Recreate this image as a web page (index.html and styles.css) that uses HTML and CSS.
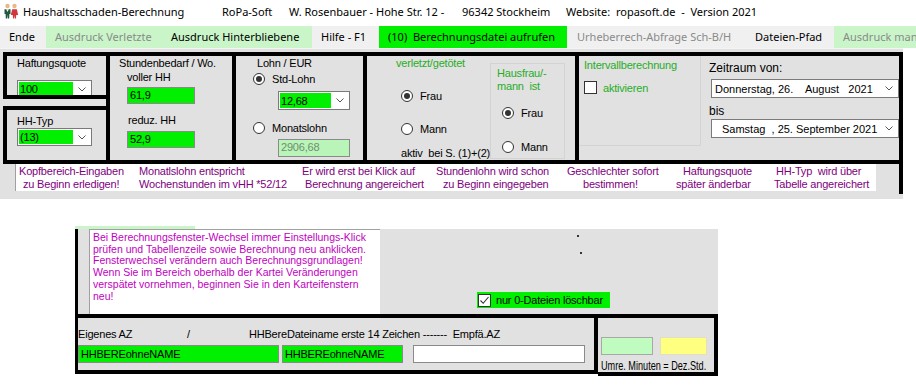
FILE: index.html
```html
<!DOCTYPE html>
<html>
<head>
    <meta charset="utf-8">
    <title>Haushaltsschaden-Berechnung</title>
    <link rel="stylesheet" href="styles.css">
</head>
<body>
    <div class="titlebar">
        <span class="t-icon">
            <svg width="16" height="16" viewBox="0 0 16 16">
                <circle cx="4.5" cy="3" r="2.2" fill="#e8b888"/>
                <path d="M1.5 6.2 L7.5 6.2 L7.5 11 L6.4 11 L6.2 15.5 L4.9 15.5 L4.6 11.5 L4.2 15.5 L2.8 15.5 L2.6 11 L1.5 11 Z" fill="#1f5a3c"/>
                <circle cx="11.5" cy="3" r="2.2" fill="#e8b888"/>
                <path d="M9.2 6.2 L13.8 6.2 L15.2 12 L13.2 12 L13 15.5 L11.9 15.5 L11.5 12.5 L11.1 15.5 L10 15.5 L9.8 12 L7.8 12 Z" fill="#d2363a"/>
                <path d="M3.2 6.2 L4.5 9 L5.8 6.2 Z" fill="#fff"/>
            </svg>
        </span>
        <span class="t-name">Haushaltsschaden-Berechnung</span>
        <span class="t-firm">RoPa-Soft</span>
        <span class="t-addr">W. Rosenbauer - Hohe Str. 12 -</span>
        <span class="t-city">96342 Stockheim</span>
        <span class="t-web">Website:  ropasoft.de  -  Version 2021</span>
    </div>

    <div class="menubar">
        <span class="mi m-ende">Ende</span>
        <span class="mi m-av light off">Ausdruck Verletzte</span>
        <span class="mi m-ah light">Ausdruck Hinterbliebene</span>
        <span class="mi m-hilfe">Hilfe - F1</span>
        <span class="mi m-calc lime">(10)  Berechnungsdatei aufrufen</span>
        <span class="mi m-urh off">Urheberrech-Abfrage Sch-B/H</span>
        <span class="mi m-pfad">Dateien-Pfad</span>
        <span class="mi m-man light off">Ausdruck man</span>
    </div>

    <div class="top">
        <div class="groups">
            <div class="col1">
                <div class="grp grp-a">
                    <div class="lbl">Haftungsquote</div>
                    <div class="combo combo-q">
                        <span class="fill">100</span>
                        <svg class="chev" width="8" height="5" viewBox="0 0 8 5"><polyline points="0.5,0.5 4,4 7.5,0.5" fill="none" stroke="#555" stroke-width="1"/></svg>
                    </div>
                </div>
                <div class="grp grp-b">
                    <div class="lbl">HH-Typ</div>
                    <div class="combo combo-q">
                        <span class="fill">(13)</span>
                        <svg class="chev" width="8" height="5" viewBox="0 0 8 5"><polyline points="0.5,0.5 4,4 7.5,0.5" fill="none" stroke="#555" stroke-width="1"/></svg>
                    </div>
                </div>
            </div>

            <div class="grp grp-c">
                <div class="lbl">Stundenbedarf / Wo.</div>
                <div class="lbl c-voll">voller HH</div>
                <div class="tb c-tb1">61,9</div>
                <div class="lbl c-red">reduz. HH</div>
                <div class="tb c-tb2">52,9</div>
            </div>

            <div class="grp grp-d">
                <div class="lbl d-head">Lohn / EUR</div>
                <div class="radio d-r1"><i class="on"></i>Std-Lohn</div>
                <div class="combo combo-l">
                    <span class="fill">12,68</span>
                    <svg class="chev" width="8" height="5" viewBox="0 0 8 5"><polyline points="0.5,0.5 4,4 7.5,0.5" fill="none" stroke="#555" stroke-width="1"/></svg>
                </div>
                <div class="radio d-r2"><i></i>Monatslohn</div>
                <div class="tb pale d-tb">2906,68</div>
            </div>

            <div class="grp grp-e">
                <div class="e-left">
                    <div class="lbl green">verletzt/getötet</div>
                    <div class="radio e-r1"><i class="on"></i>Frau</div>
                    <div class="radio e-r2"><i></i>Mann</div>
                    <div class="lbl e-note">aktiv  bei S. (1)+(2)</div>
                </div>
                <div class="e-right">
                    <div class="lbl green">Hausfrau/-</div>
                    <div class="lbl green">mann  ist</div>
                    <div class="radio e-r3"><i class="on"></i>Frau</div>
                    <div class="radio e-r4"><i></i>Mann</div>
                </div>
            </div>

            <div class="grp grp-f">
                <div class="f-left">
                    <div class="lbl green">Intervallberechnung</div>
                    <div class="cbrow"><span class="cb"></span><span class="green">aktivieren</span></div>
                </div>
                <div class="f-right">
                    <div class="lbl12">Zeitraum von:</div>
                    <div class="date date-1">
                        <span>Donnerstag, 26.    August   2021</span>
                        <svg class="chev" width="8" height="5" viewBox="0 0 8 5"><polyline points="0.5,0.5 4,4 7.5,0.5" fill="none" stroke="#555" stroke-width="1"/></svg>
                    </div>
                    <div class="lbl12 f-bis">bis</div>
                    <div class="date date-2">
                        <span>Samstag  , 25. September 2021</span>
                        <svg class="chev" width="8" height="5" viewBox="0 0 8 5"><polyline points="0.5,0.5 4,4 7.5,0.5" fill="none" stroke="#555" stroke-width="1"/></svg>
                    </div>
                </div>
            </div>
        </div>

        <div class="hints-wrap">
            <div class="hints">
                <div class="hc h1"><div class="l1">Kopfbereich-Eingaben</div><div class="l2">zu Beginn erledigen!</div></div>
                <div class="hc h2"><div class="l1">Monatlslohn entspricht</div><div class="l2">Wochenstunden im vHH *52/12</div></div>
                <div class="hc h3"><div class="l1">Er wird erst bei Klick auf</div><div class="l2">Berechnung angereichert</div></div>
                <div class="hc h4"><div class="l1">Stundenlohn wird schon</div><div class="l2">zu Beginn eingegeben</div></div>
                <div class="hc h5"><div class="l1">Geschlechter sofort</div><div class="l2">bestimmen!</div></div>
                <div class="hc h6"><div class="l1">Haftungsquote</div><div class="l2">später änderbar</div></div>
                <div class="hc h7"><div class="l1">HH-Typ  wird über</div><div class="l2">Tabelle angereichert</div></div>
            </div>
        </div>
    </div>

    <div class="lower">
        <div class="strip"></div>
        <div class="lower-body">
            <div class="msg">Bei Berechnungsfenster-Wechsel immer Einstellungs-Klick prüfen und Tabellenzeile sowie Berechnung neu anklicken. Fensterwechsel verändern auch Berechnungsgrundlagen! Wenn Sie im Bereich oberhalb der Kartei Veränderungen verspätet vornehmen, beginnen Sie in den Karteifenstern neu!</div>
            <div class="lower-right">
                <span class="dot dot-1"></span>
                <span class="dot dot-2"></span>
                <div class="keep">
                    <span class="cb">
                        <svg width="11" height="11" viewBox="0 0 11 11"><polyline points="1.5,5.5 4.2,8.3 9.5,2" fill="none" stroke="#333" stroke-width="1.1"/></svg>
                    </span>
                    <span>nur 0-Dateien löschbar</span>
                </div>
            </div>
        </div>
        <div class="lower-foot">
            <div class="azbox">
                <div class="az-labels">
                    <span class="az-l1">Eigenes AZ</span>
                    <span class="az-l2">/</span>
                    <span>HHBereDateiname erste 14 Zeichen -------  Empfä.AZ</span>
                </div>
                <div class="az-inputs">
                    <div class="tb az-tb1">HHBEREohneNAME</div>
                    <div class="tb az-tb2">HHBEREohneNAME</div>
                    <div class="tb white az-tb3"></div>
                </div>
            </div>
            <div class="minbox">
                <div class="swatches">
                    <span class="sw sw-green"></span>
                    <span class="sw sw-yellow"></span>
                </div>
                <div class="min-note">Umre. Minuten = Dez.Std.</div>
            </div>
        </div>
    </div>
</body>
</html>
```

FILE: styles.css
```css
* {
    box-sizing: border-box;
}

body {
    margin: 0;
    width: 916px;
    height: 389px;
    overflow: hidden;
    background-color: #fff;
    font-family: "Liberation Sans", Arial, sans-serif;
    font-size: 11px;
    letter-spacing: -0.2px;
    color: #000;
}

/* window title */
.titlebar {
    display: flex;
    align-items: center;
    height: 22px;
    font-family: "Noto Sans", sans-serif;
    font-size: 11px;
    letter-spacing: 0;
    white-space: pre;
}

.titlebar span {
    flex: none;
}

.t-icon {
    display: flex;
    width: 23px;
    padding-left: 3px;
}

.t-name { width: 199px; }
.t-firm { width: 67px; }
.t-addr { width: 173px; }
.t-city { width: 104px; }

/* menu */
.menubar {
    display: flex;
    height: 22px;
    margin-top: 4px;
    background-color: #f0f0f0;
    font-family: "Noto Sans", sans-serif;
    font-size: 11px;
    letter-spacing: 0;
}

.mi {
    flex: none;
    padding-left: 9px;
    line-height: 22px;
    white-space: pre;
    overflow: hidden;
}

.mi.light { background-color: #c9f5c9; }
.mi.lime { background-color: #00f000; }
.mi.off { color: #8a8a8a; }

.m-ende { width: 46px; }
.m-av { width: 115px; }
.m-ah { width: 151px; padding-left: 10px; }
.m-hilfe { width: 67px; }
.m-calc { width: 188px; }
.m-urh { width: 179px; padding-left: 10px; }
.m-pfad { width: 88px; }
.m-man { flex: 1; }

/* upper form */
.top {
    width: 903px;
    padding: 3px 0 5px 0;
    background-color: #e1e1e1;
    border-top: 1px solid #f4f4f4;
}

.groups {
    display: flex;
    height: 112px;
    margin-left: 3px;
}

.col1 {
    display: flex;
    flex-direction: column;
    justify-content: space-between;
    width: 103px;
}

.grp {
    border: 4px solid #000;
    border-right: 0;
    overflow: hidden;
}

.lbl {
    line-height: 13px;
    white-space: pre;
}

.lbl12 {
    font-size: 12px;
    letter-spacing: 0;
    line-height: 14px;
}

.green {
    color: #26ad26;
}

.grp-a {
    height: 47px;
    padding: 1px 0 0 10px;
}

.grp-a .combo {
    margin-top: 10px;
}

.grp-b {
    height: 58px;
    padding: 5px 0 0 10px;
}

/* combo boxes and text boxes */
.combo {
    display: flex;
    align-items: center;
    height: 18px;
    padding: 1px;
    border: 1px solid #7a7a7a;
    background-color: #fff;
}

.combo .fill {
    height: 100%;
    padding-left: 1px;
    line-height: 14px;
    background-color: #00f000;
}

.chev {
    flex: none;
    margin-left: auto;
    margin-right: 4px;
}

.combo-q {
    width: 75px;
}

.combo-q .fill {
    width: 54px;
}

.tb {
    height: 17px;
    padding-left: 2px;
    border: 1px solid #8a8a8a;
    line-height: 15px;
    background-color: #00f000;
    white-space: pre;
}

.tb.pale {
    color: #6f8f6f;
    background-color: #b9f4b9;
}

.tb.white {
    background-color: #fff;
}

.grp-c {
    width: 126px;
    padding: 1px 0 0 9px;
}

.c-voll {
    margin: 1px 0 0 8px;
}

.c-tb1 {
    width: 68px;
    margin: 3px 0 0 8px;
}

.c-red {
    margin: 10px 0 0 9px;
}

.c-tb2 {
    width: 68px;
    margin: 4px 0 0 8px;
}

/* radio buttons */
.radio {
    display: flex;
    align-items: center;
    height: 14px;
}

.radio i {
    display: flex;
    align-items: center;
    justify-content: center;
    flex: none;
    width: 12px;
    height: 12px;
    margin-right: 7px;
    border: 1px solid #333;
    border-radius: 50%;
    background-color: #fff;
}

.radio i.on::after {
    content: "";
    width: 6px;
    height: 6px;
    border-radius: 50%;
    background-color: #333;
}

.grp-d {
    width: 131px;
    padding: 1px 0 0 17px;
}

.d-head {
    margin-left: 4px;
}

.d-r1 {
    margin-top: 2px;
}

.combo-l {
    width: 72px;
    height: 19px;
    margin: 5px 0 0 25px;
}

.combo-l .fill {
    width: 51px;
    padding-top: 1px;
}

.d-r2 {
    margin-top: 11px;
}

.d-tb {
    width: 72px;
    height: 18px;
    margin: 4px 0 0 25px;
}

.grp-e {
    display: flex;
    width: 212px;
}

.e-left {
    width: 123px;
    padding: 1px 0 0 29px;
}

.e-r1 {
    margin: 19px 0 0 5px;
}

.e-r2 {
    margin: 19px 0 0 5px;
}

.e-note {
    margin: 11px 0 0 5px;
}

.e-right {
    width: 75px;
    height: 96px;
    margin-top: 7px;
    padding: 3px 0 0 6px;
    border: 1px solid #d3d3d3;
}

.e-r3 {
    margin: 13px 0 0 5px;
}

.e-r4 {
    margin: 20px 0 0 5px;
}

.grp-f {
    display: flex;
    width: 328px;
    border-right: 4px solid #000;
}

.f-left {
    width: 126px;
    height: 90px;
    padding: 3px 0 0 5px;
    border-right: 1px solid #d3d3d3;
    border-bottom: 1px solid #d3d3d3;
}

.cbrow {
    display: flex;
    align-items: center;
    margin-top: 9px;
}

.cb {
    display: flex;
    align-items: center;
    justify-content: center;
    flex: none;
    width: 13px;
    height: 13px;
    margin-right: 6px;
    border: 1px solid #333;
    background-color: #fff;
}

.f-right {
    flex: 1;
    padding: 5px 0 0 8px;
}

.date {
    display: flex;
    align-items: center;
    width: 188px;
    height: 19px;
    margin: 4px 0 0 2px;
    border: 1px solid #7a7a7a;
    background-color: #fff;
    font-size: 11px;
    letter-spacing: 0;
    white-space: pre;
}

.date .chev {
    margin-right: 5px;
}

.date-1 {
    padding-left: 3px;
}

.date-2 {
    margin-top: 1px;
    padding-left: 10px;
}

.f-bis {
    margin-top: 6px;
}

/* hint line under the groups */
.hints-wrap {
    height: 30px;
    border-right: 4px solid #000;
}

.hints {
    display: flex;
    width: 861px;
    height: 27px;
    margin-left: 15px;
    padding-top: 1px;
    border-left: 1px solid #a0a0a0;
    background-color: #fff;
    color: #800080;
    line-height: 12.5px;
    white-space: pre;
}

.hc { flex: none; }
.h1 { width: 123px; }
.h2 { width: 163px; }
.h3 { width: 134px; }
.h4 { width: 131px; }
.h5 { width: 109px; }
.h6 { width: 98px; }
.h7 { flex: 1; }

.h1 .l1 { padding-left: 3px; }
.h1 .l2 { padding-left: 7px; }
.h3 .l2 { padding-left: 3px; }
.h4 .l2 { padding-left: 7px; }
.h5 .l2 { padding-left: 16px; }
.h6 .l1 { padding-left: 7px; }
.h7 .l1 { padding-left: 2px; }

/* lower form */
.lower {
    width: 643px;
    margin: 27px 0 0 75px;
}

.strip {
    width: 120px;
    height: 3px;
    background-color: #c9f5c9;
}

.lower-body {
    display: flex;
    height: 85px;
    border-left: 3px solid #000;
    background-color: #e1e1e1;
}

.msg {
    width: 291px;
    margin-left: 11px;
    padding: 2px 0 0 3px;
    border-top: 1px solid #a0a0a0;
    border-left: 1px solid #a0a0a0;
    background-color: #fff;
    color: #c000c0;
    font-size: 10.5px;
    letter-spacing: 0;
    line-height: 11.7px;
}

.lower-right {
    display: flex;
    flex: 1;
    flex-direction: column;
    align-items: flex-start;
}

.dot {
    width: 2px;
    height: 2px;
    background-color: #333;
}

.dot-1 {
    margin: 6px 0 0 197px;
}

.dot-2 {
    margin: 15px 0 0 200px;
}

.keep {
    display: flex;
    align-items: center;
    width: 133px;
    height: 16px;
    margin: auto 0 6px 97px;
    padding-left: 1px;
    background-color: #00f000;
}

.keep .cb {
    margin-right: 5px;
}

.lower-foot {
    display: flex;
    align-items: flex-start;
}

.azbox {
    width: 523px;
    height: 60px;
    border: 4px solid #000;
    border-left-width: 3px;
    background-color: #e1e1e1;
}

.az-labels {
    display: flex;
    margin-top: 10px;
    line-height: 13px;
    white-space: pre;
}

.az-l1 { width: 109px; }
.az-l2 { width: 62px; }

.az-inputs {
    display: flex;
    margin-top: 4px;
}

.az-inputs .tb {
    height: 18px;
    line-height: 16px;
}

.az-tb1 {
    width: 201px;
}

.az-tb2 {
    width: 121px;
    margin-left: 3px;
}

.az-tb3 {
    width: 172px;
    margin-left: 10px;
}

.minbox {
    width: 120px;
    height: 62px;
    border: 4px solid #000;
    border-left: 0;
    background-color: #e1e1e1;
}

.swatches {
    display: flex;
    margin-top: 19px;
}

.sw {
    height: 18px;
    border: 1px solid #a8a8a8;
}

.sw-green {
    width: 52px;
    margin-left: 3px;
    background-color: #c0fcc0;
}

.sw-yellow {
    width: 47px;
    margin-left: 7px;
    border-color: #e0e0c0;
    background-color: #ffff80;
}

.min-note {
    margin: 6px 0 0 3px;
    font-size: 12px;
    letter-spacing: 0;
    line-height: 11px;
    white-space: nowrap;
    transform: scaleX(0.76);
    transform-origin: left center;
}
```
